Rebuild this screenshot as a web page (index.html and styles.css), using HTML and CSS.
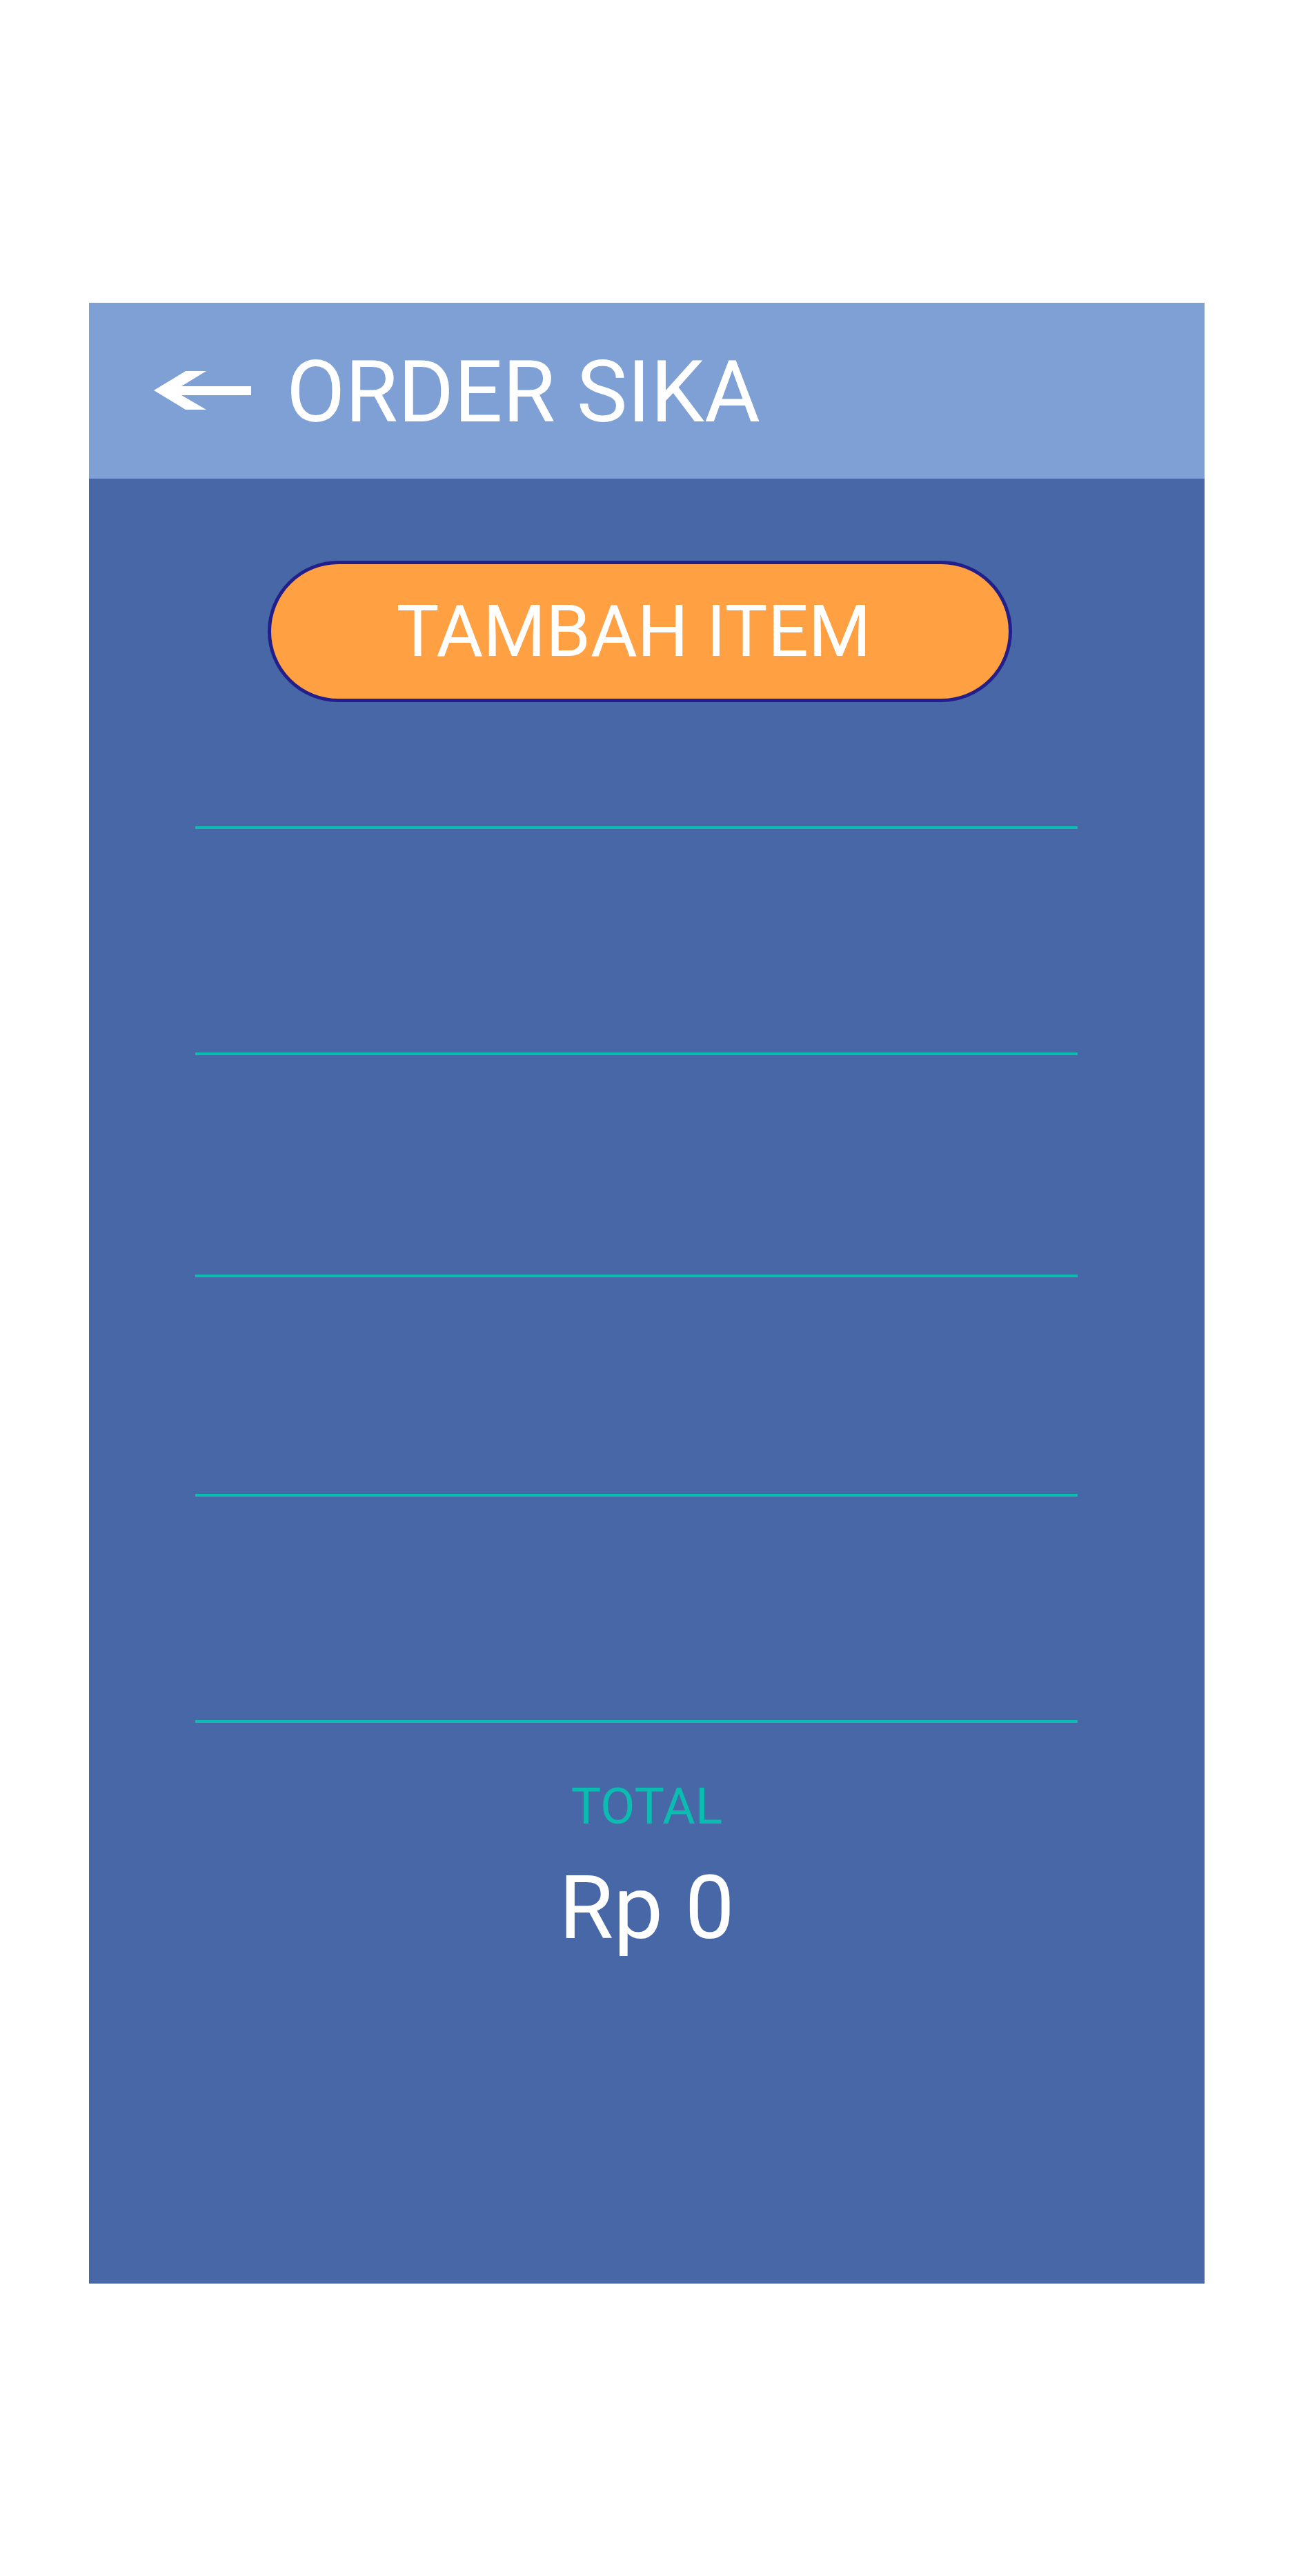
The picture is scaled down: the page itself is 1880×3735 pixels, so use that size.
FILE: index.html
```html
<!DOCTYPE html>
<html lang="id">
<head>
<meta charset="utf-8">
<title>Order Sika</title>
<link rel="stylesheet" href="styles.css">
</head>
<body>
<div class="screen">
  <header class="topbar">
    <svg class="back" width="141" height="57" viewBox="0 0 141 57" aria-label="Kembali">
      <polygon points="0,28 46,0 76,0 40,22 141,22 141,35 40,35 76,56 46,56" fill="#ffffff"/>
    </svg>
    <h1 class="title">ORDER SIKA</h1>
  </header>
  <main class="content">
    <button class="add-btn" type="button">TAMBAH ITEM</button>
    <div class="items">
      <div class="item"></div>
      <div class="item"></div>
      <div class="item"></div>
      <div class="item"></div>
      <div class="item item-end"></div>
    </div>
    <div class="total">
      <div class="total-label">TOTAL</div>
      <div class="total-value">Rp 0</div>
    </div>
  </main>
</div>
</body>
</html>
```
FILE: styles.css
```css
html, body {
  margin: 0;
  padding: 0;
  background: #ffffff;
}

body {
  font-family: Roboto, "Liberation Sans", sans-serif;
  height: 3735px;
}

.screen {
  margin-left: 129px;
  padding-top: 439px;
  width: 1617px;
}

.topbar {
  height: 255px;
  background: #7fa0d4;
  display: flex;
  align-items: center;
  padding-left: 94px;
  box-sizing: border-box;
}

.back {
  display: block;
  flex: none;
}

.title {
  margin: 0 0 0 51px;
  padding-top: 4px;
  font-family: Roboto, "Liberation Sans", sans-serif;
  font-weight: 400;
  font-size: 124px;
  line-height: 1;
  color: #ffffff;
}

.content {
  background: #4767a7;
  height: 2617px;
  padding-top: 119px;
  box-sizing: border-box;
  display: flex;
  flex-direction: column;
}

.add-btn {
  margin-left: 259px;
  width: 1079px;
  height: 205px;
  box-sizing: border-box;
  border: 5px solid #221f8c;
  border-radius: 103px;
  background: #ffa043;
  color: #ffffff;
  font-family: Roboto, "Liberation Sans", sans-serif;
  font-size: 104px;
  font-weight: 400;
  line-height: 1;
  padding: 0 18px 0 0;
  cursor: pointer;
}

.items {
  margin-top: 180px;
  margin-left: 154px;
  width: 1279px;
}

.item {
  border-top: 4px solid #0bbcb0;
  box-sizing: border-box;
}

.item:nth-child(1) { height: 328px; }
.item:nth-child(2) { height: 322px; }
.item:nth-child(3) { height: 318px; }
.item:nth-child(4) { height: 328px; }
.item-end { height: 4px; }

.total {
  margin-top: 85px;
  text-align: center;
}

.total-label {
  font-size: 73px;
  line-height: 1;
  color: #0bbcb0;
}

.total-value {
  margin-top: 46px;
  font-size: 128px;
  line-height: 1;
  color: #ffffff;
}
```
